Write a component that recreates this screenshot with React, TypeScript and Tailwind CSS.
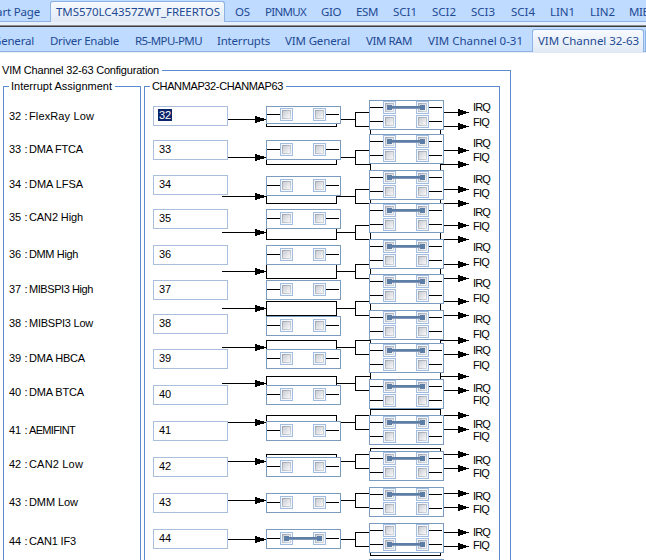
import { useLayoutEffect, useRef } from "react";

type FitProps = { text: string; width: number; className?: string };

// Spreads or tightens the letters so that the text takes the given width.
function Fit({ text, width, className = "" }: FitProps) {
  const ref = useRef<HTMLSpanElement>(null);
  useLayoutEffect(() => {
    const el = ref.current;
    if (!el) return;
    el.style.letterSpacing = "0px";
    const natural = el.getBoundingClientRect().width;
    el.style.letterSpacing = `${(width - natural) / text.length}px`;
  }, [text, width]);
  return (
    <span ref={ref} className={`inline-block whitespace-pre ${className}`}>
      {text}
    </span>
  );
}

type Tab = { label: string; x: number; width: number; active?: boolean };

const mainTabs: Tab[] = [
  { label: "Start Page", x: -14, width: 54 },
  { label: "TMS570LC4357ZWT_FREERTOS", x: 56, width: 164, active: true },
  { label: "OS", x: 235, width: 15 },
  { label: "PINMUX", x: 265, width: 41 },
  { label: "GIO", x: 321, width: 20 },
  { label: "ESM", x: 356, width: 22 },
  { label: "SCI1", x: 393, width: 24 },
  { label: "SCI2", x: 432, width: 24 },
  { label: "SCI3", x: 471, width: 24 },
  { label: "SCI4", x: 511, width: 24 },
  { label: "LIN1", x: 550, width: 25 },
  { label: "LIN2", x: 590, width: 25 },
  { label: "MIBSPI1", x: 629, width: 43 },
];

const subTabs: Tab[] = [
  { label: "General", x: -7, width: 41 },
  { label: "Driver Enable", x: 50, width: 69 },
  { label: "R5-MPU-PMU", x: 135, width: 67 },
  { label: "Interrupts", x: 217, width: 53 },
  { label: "VIM General", x: 285, width: 65 },
  { label: "VIM RAM", x: 366, width: 46 },
  { label: "VIM Channel 0-31", x: 428, width: 95 },
  { label: "VIM Channel 32-63", x: 538, width: 101, active: true },
];

function TabRow({ tabs, tall }: { tabs: Tab[]; tall?: boolean }) {
  let cursor = -20;
  return (
    <div className="flex -ml-5 w-[700px] text-[11.5px] leading-[16px] text-[#1e4a94]">
      {tabs.map((t) => {
        const pad = t.active ? 6 : 0;
        const gap = t.x - pad - cursor;
        const width = t.width + pad + (t.active ? 5 : 0);
        cursor = t.x - pad + width;
        return (
          <div
            key={t.label}
            style={{ marginLeft: gap, width, paddingLeft: t.active ? 5 : 0 }}
            className={`box-border shrink-0 ${
              t.active
                ? `${tall ? "h-[24px] mt-[2px] pt-[3px]" : "h-[21px] mt-[1px] pt-[2px]"} rounded-t-[3px] border border-b-0 border-[#8db2e3] bg-linear-to-b from-[#f7faff] to-[#dfe9f5]`
                : tall
                  ? "pt-[6px]"
                  : "pt-[4px]"
            }`}
          >
            <Fit text={t.label} width={t.width} />
          </div>
        );
      })}
      {tall && <div className="mt-[2px] ml-[1px] h-[22px] w-4 rounded-tl-[3px] border border-b-0 border-r-0 border-[#8db2e3]" />}
    </div>
  );
}

const channels = [
  { id: 32, name: "FlexRay Low", w: 64, label: 120, box: 106, irq: 111, fiq: 126 },
  { id: 33, name: "DMA FTCA", w: 53, label: 153, box: 140, irq: 147, fiq: 161 },
  { id: 34, name: "DMA LFSA", w: 53, label: 188, box: 175, irq: 183, fiq: 197 },
  { id: 35, name: "CAN2 High", w: 53, label: 221, box: 209, irq: 216, fiq: 230 },
  { id: 36, name: "DMM High", w: 48, label: 258, box: 245, irq: 251, fiq: 266 },
  { id: 37, name: "MIBSPI3 High", w: 63, label: 293, box: 280, irq: 287, fiq: 302 },
  { id: 38, name: "MIBSPI3 Low", w: 63, label: 327, box: 314, irq: 323, fiq: 338 },
  { id: 39, name: "DMA HBCA", w: 55, label: 362, box: 349, irq: 354, fiq: 369 },
  { id: 40, name: "DMA BTCA", w: 54, label: 396, box: 385, irq: 392, fiq: 404 },
  { id: 41, name: "AEMIFINT", w: 45, label: 434, box: 421, irq: 428, fiq: 440 },
  { id: 42, name: "CAN2 Low", w: 53, label: 468, box: 457, irq: 464, fiq: 477 },
  { id: 43, name: "DMM Low", w: 48, label: 506, box: 493, irq: 500, fiq: 513 },
  { id: 44, name: "CAN1 IF3", w: 46, label: 545, box: 529, irq: 536, fiq: 549 },
];

// Top of each input-side switch, and the height of each wire.
const switchTops = [106, 140, 176, 209, 245, 280, 316, 349, 385, 421, 457, 493, 529, 565];
const wires = [119, 157, 196, 232, 271, 308, 347, 383, 422, 461, 500, 539];

const BODY_TOP = 93;

function Contact({ x, y }: { x: number; y: number }) {
  return (
    <g>
      <rect x={x + 0.5} y={y + 0.5} width={12} height={12} fill="#f3f6fa" stroke="#a3bde0" />
      <rect x={x + 2.5} y={y + 2.5} width={8} height={8} fill="url(#contact)" stroke="url(#contactEdge)" />
    </g>
  );
}

function Pole({ x, y, closed }: { x: number; y: number; closed?: boolean }) {
  return (
    <g>
      <rect x={x + 1} y={y} width={13} height={1} fill="#000" />
      <rect x={x + 60} y={y} width={13} height={1} fill="#000" />
      <Contact x={x + 14} y={y - 6} />
      <Contact x={x + 47} y={y - 6} />
      {closed && (
        <g fill="#5c7da6">
          <rect x={x + 18} y={y - 2} width={5} height={5} />
          <rect x={x + 51} y={y - 2} width={5} height={5} />
          <rect x={x + 23} y={y - 1} width={28} height={2} />
          <rect x={x + 23} y={y + 1} width={28} height={1} fill="#8198b8" />
        </g>
      )}
    </g>
  );
}

function Wiring() {
  return (
    <svg width={249} height={467} viewBox={`222 ${BODY_TOP} 249 467`} shapeRendering="crispEdges" className="block -ml-[6px] shrink-0">
      <defs>
        <linearGradient id="contact" x1="0" y1="0" x2="1" y2="1">
          <stop offset="0" stopColor="#c6c9d0" />
          <stop offset="1" stopColor="#fbfbfb" />
        </linearGradient>
        <linearGradient id="contactEdge" x1="0" y1="0" x2="1" y2="1">
          <stop offset="0" stopColor="#a0a8b5" />
          <stop offset="1" stopColor="#d3d7dd" />
        </linearGradient>
      </defs>
      {wires.map((w) => (
        <g key={w}>
          <g fill="none" stroke="#000">
            <path d={`M222 ${w + 0.5}H266M337 ${w + 0.5}H355`} />
            <rect x={266.5} y={w - 6.5} width={70} height={14} />
            <path d={`M370 ${w - 6.5}H355.5V${w + 7.5}H370`} />
            <rect x={370.5} y={w - 12.5} width={70} height={29} />
            <path d={`M441 ${w - 6.5}H460M441 ${w + 7.5}H460`} />
          </g>
          <path d={`M255 ${w - 3}h2v1h3v1h4v3h-4v1h-3v1h-2z`} />
          {[w - 7, w + 7].map((y) => (
            <path key={y} d={`M458 ${y - 3}h2v1h3v1h3v1h3v1h-3v1h-3v1h-3v1h-2z`} />
          ))}
        </g>
      ))}
      {switchTops.map((top, i) => {
        const short = i === 0;
        const last = i === 12;
        return (
          <g key={top}>
            <rect x={266.5} y={top + 0.5} width={74} height={short ? 17 : 19} fill="#fff" stroke="#7b9cbf" />
            <Pole x={266} y={top + (short ? 8 : 9)} closed={last} />
            <rect x={369.5} y={top - 5.5} width={74} height={29} fill="#fff" stroke="#7b9cbf" />
            <Pole x={369} y={top + 1} closed={!last} />
            <Pole x={369} y={top + 15} closed={last} />
          </g>
        );
      })}
    </svg>
  );
}

function Legend({ text, width, gap }: { text: string; width: number; gap: number }) {
  return (
    <div className="flex h-[14px] items-start">
      <div className="mt-[7px] h-px shrink-0 bg-[#5b8bd0]" style={{ width: gap }} />
      <div className="ml-[2px] mr-[3px] leading-[14px]">
        <Fit text={text} width={width} />
      </div>
      <div className="mt-[7px] h-px grow bg-[#5b8bd0]" />
    </div>
  );
}

export default function App() {
  let labelEnd = BODY_TOP;
  let inputEnd = BODY_TOP;
  let signalEnd = BODY_TOP;
  return (
    <div className="h-[560px] w-[646px] overflow-hidden bg-white font-['Noto_Sans',sans-serif]">
      <div className="h-[22px] overflow-hidden bg-[#bfdbff] shadow-[inset_0_-1px_#8db2e3]">
        <TabRow tabs={mainTabs} />
      </div>
      <div className="h-[3px] bg-[#e6effa]" />
      <div className="h-px bg-[#8a8d92]" />
      <div className="h-px bg-[#3c3c3c]" />
      <div className="h-[25px] overflow-hidden bg-[#bfdbff] shadow-[inset_0_-1px_#8db2e3]">
        <TabRow tabs={subTabs} tall />
      </div>
      <div className="flex h-px">
        <div className="w-[532px] bg-[#e9f1fc]" />
        <div className="grow bg-[#dfe9f5]" />
      </div>

      <div className="mt-[10px] h-[497px] w-[511px] font-['Liberation_Sans',Arial,sans-serif] text-[11px] text-black">
        <Legend text="VIM Channel 32-63 Configuration" width={157} gap={0} />
        <div className="-mt-[7px] flex h-[490px] border-r border-[#5b8bd0] pt-[9px] pl-[3px]">
          <div className="w-[138px] shrink-0">
            <Legend text="Interrupt Assignment" width={101} gap={6} />
            <div className="-mt-[7px] h-[481px] border-x border-[#5b8bd0] pt-[7px] pl-[5px]">
              {channels.map((c) => {
                const top = c.label - 11;
                const gap = top - labelEnd;
                labelEnd = top + 14;
                return (
                  <div key={c.id} className="flex h-[14px] leading-[14px]" style={{ marginTop: gap }}>
                    <span className="w-[15.5px]">{c.id}</span>
                    <span className="w-[4.5px]">:</span>
                    <Fit text={c.name} width={c.w + 1} />
                  </div>
                );
              })}
            </div>
          </div>

          <div className="ml-[3px] w-[356px] shrink-0">
            <Legend text="CHANMAP32-CHANMAP63" width={131} gap={6} />
            <div className="-mt-[7px] flex h-[481px] border-x border-[#5b8bd0] pt-[7px] pl-[8px]">
              <div className="z-10 w-[75px] shrink-0">
                {channels.map((c, i) => {
                  const gap = c.box - inputEnd;
                  inputEnd = c.box + 20;
                  return (
                    <div
                      key={c.id}
                      className="flex h-[20px] border border-[#a9bfdd] bg-white pt-px pl-[4px] leading-[14px]"
                      style={{ marginTop: gap }}
                    >
                      <span className={i === 0 ? "mt-px h-[12px] w-[14px] bg-[#0a246a] pl-px leading-[12px] text-white" : "pl-px"}>{c.id}</span>
                    </div>
                  );
                })}
              </div>
              <Wiring />
              <div className="ml-[2px] w-6 shrink-0">
                {channels.map((c) => {
                  const top = c.irq - 11;
                  const gap = top - signalEnd;
                  const height = c.fiq - c.irq;
                  signalEnd = top + height + 14;
                  return (
                    <div key={c.id} className="leading-[14px]" style={{ marginTop: gap, height: height + 14 }}>
                      <div style={{ height }}>
                        <Fit text="IRQ" width={17} />
                      </div>
                      <div>
                        <Fit text="FIQ" width={16} />
                      </div>
                    </div>
                  );
                })}
              </div>
            </div>
          </div>
        </div>
      </div>
    </div>
  );
}
